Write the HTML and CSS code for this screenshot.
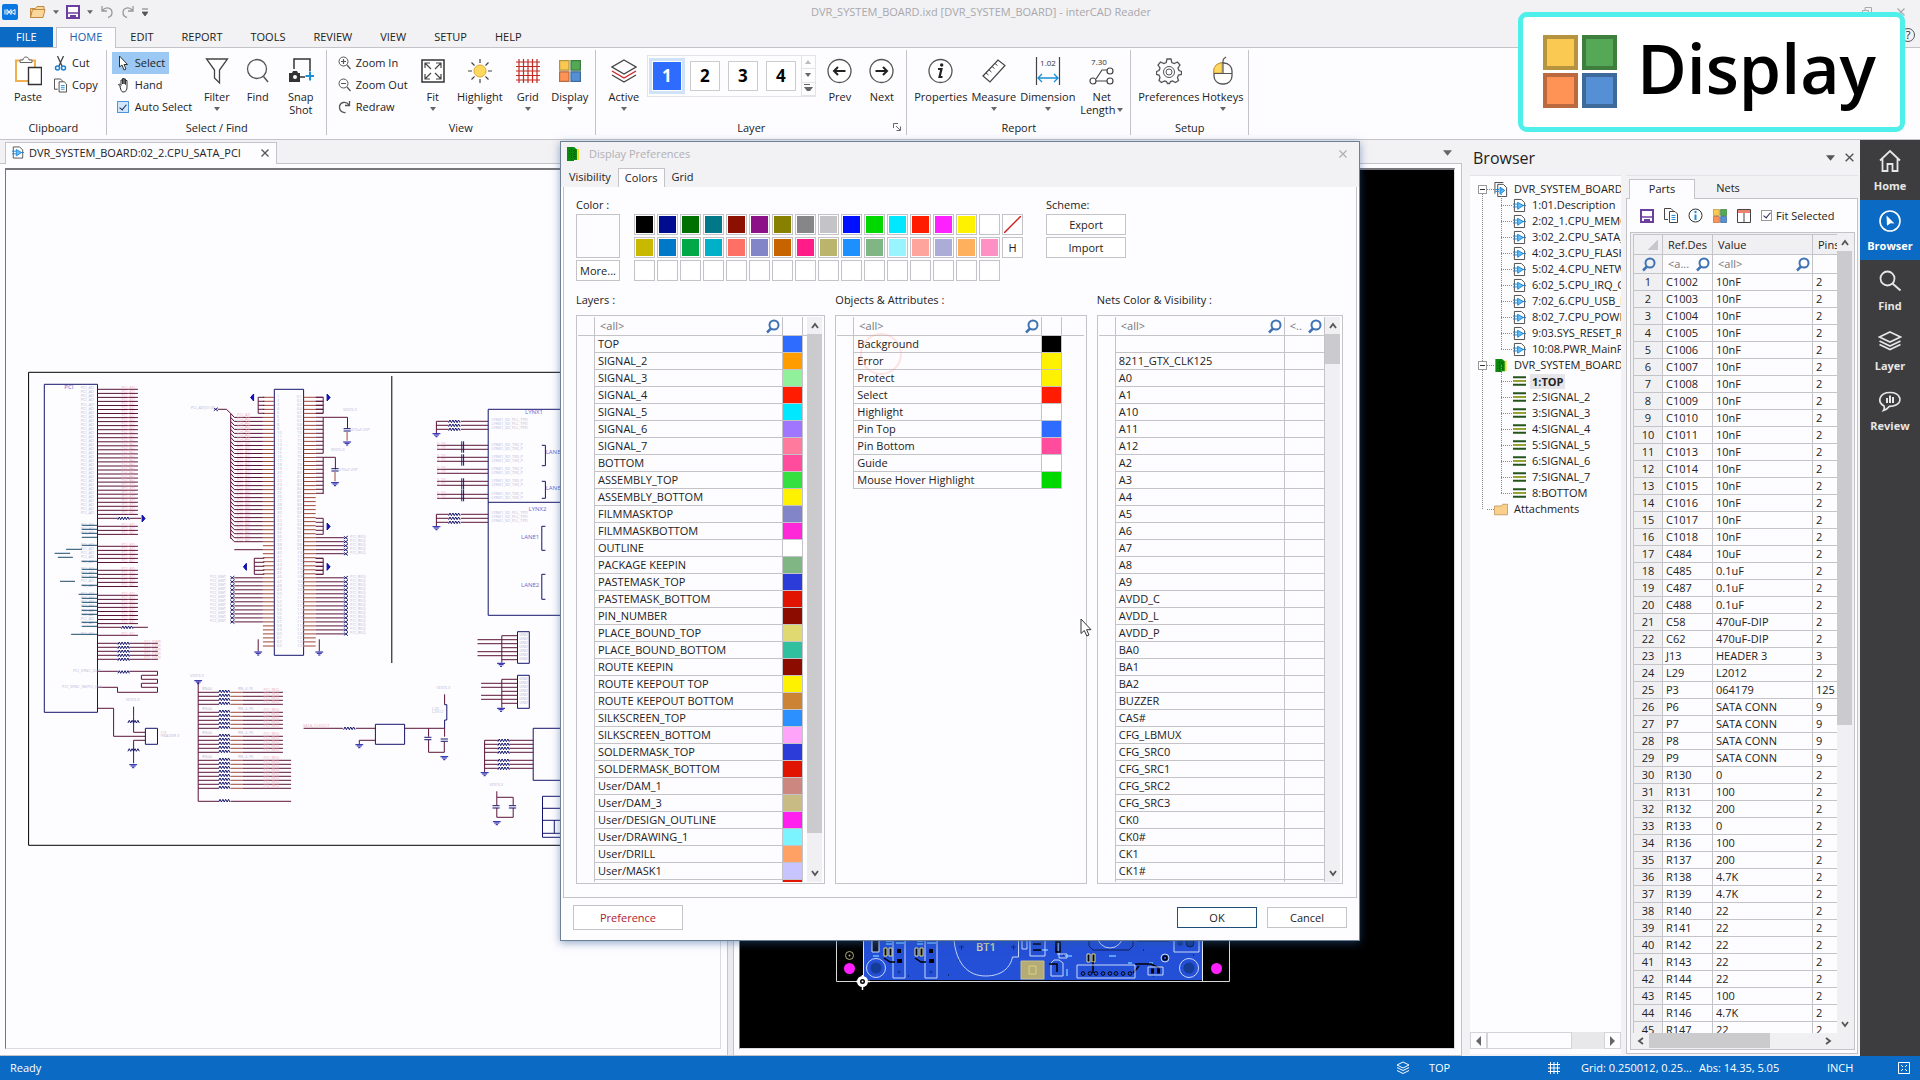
FILE: index.html
```html
<!DOCTYPE html>
<html lang="en">
<head>
    <meta charset="UTF-8">
    <meta name="viewport" content="width=device-width, initial-scale=1.0">
    <title>DVR_SYSTEM_BOARD.ixd [DVR_SYSTEM_BOARD] - interCAD Reader</title>
    <link rel="stylesheet" href="styles.css">
</head>
<body>
    <svg class="sprite" aria-hidden="true">
        <symbol id="i-page" viewBox="0 0 14 16"><path d="M1.5 1.5h7.5l3.500 3.500v9.500h-11z" fill="#fff" stroke="#444"/><path d="M0 6.500h5M0 9.500h5M10 8h4" stroke="#1a7fd0"/><path d="M5 4.500l6 3.500-6 4z" fill="#5fc0ff" stroke="#1a7fd0"/></symbol>
        <symbol id="i-pages" viewBox="0 0 14 16"><path d="M.5 12.500V.5h9" fill="none" stroke="#444"/><path d="M3.500 2.500h6l3.500 3.500v9.500h-9.500z" fill="#fff" stroke="#444"/><path d="M1 8h4M1 10h4" stroke="#1a7fd0"/><path d="M6 5.500l5 3.500-5 4z" fill="#5fc0ff" stroke="#1a7fd0"/></symbol>
        <symbol id="i-board" viewBox="0 0 14 16"><path d="M6 3h7v11H6z" fill="#f2dc2a"/><path d="M1 1h7l3 2.500V14H8v1H1z" fill="#0c8a10"/><path d="M3 5h8M3 8h8M3 11h8M5.500 3v11M8.500 4v10" stroke="#055c08" stroke-dasharray="1 1"/></symbol>
        <symbol id="i-layer" viewBox="0 0 14 10"><path d="M0 1h14M0 9h14" stroke="#24531c" stroke-width="2"/><path d="M0 5h14" stroke="#8c9c24" stroke-width="2"/></symbol>
        <symbol id="i-folder" viewBox="0 0 16 13"><path d="M.5 2.500h8l1.500-2h5.500v12H.5z" fill="#fbcf8c" stroke="#c49a5c"/></symbol>
        <symbol id="i-lens" viewBox="0 0 15 15"><circle cx="9" cy="6" r="4.500" fill="none" stroke="#3f73b4" stroke-width="2"/><path d="M6 9.500L2 13.500" stroke="#3f73b4" stroke-width="2.500"/></symbol>
        <symbol id="i-tiles" viewBox="0 0 22 22"><g stroke-width="1.200"><path d="M.6.6h9.400v9.600H.6z" fill="#f9c952" stroke="#b5933f"/><path d="M12 .6h9.400v9.600H12z" fill="#55a855" stroke="#3e7f3e"/><path d="M.6 11.800h9.400v9.600H.6z" fill="#ff9255" stroke="#ba6a3e"/><path d="M12 11.800h9.400v9.600H12z" fill="#5590d4" stroke="#3e699b"/></g></symbol>
        <symbol id="i-stack" viewBox="0 0 26 26"><g fill="none" stroke="#444" stroke-width="1.300"><path d="M13 2l12 7-12 7L1 9z"/><path d="M1 17l12 7 12-7"/></g><path d="M1 13l12 7 12-7" fill="none" stroke="#d02020" stroke-width="1.300"/></symbol>
        <symbol id="i-save" viewBox="0 0 14 14"><path d="M1 1h12v12H1z" fill="#fff" stroke="#6b3fa0" stroke-width="2"/><path d="M2 8h10" stroke="#6b3fa0" stroke-width="1.500"/><path d="M4 10h6v3H4z" fill="#6b3fa0"/></symbol>
        <symbol id="i-copy" viewBox="0 0 14 15"><path d="M4 11.500H.5V.5H7l2 2V3" fill="none" stroke="#444"/><path d="M5.500 3.500h5.500l2.500 2.500v8.500h-8z" fill="#fff" stroke="#444"/><path d="M7.500 7.500h4M7.500 9.500h4M7.500 11.500h4" stroke="#2b8fd6"/></symbol>
        <symbol id="i-x" viewBox="0 0 10 10"><path d="M1.500 1.500l7 7M8.500 1.500l-7 7" stroke="currentColor" stroke-width="1.300"/></symbol>
        <symbol id="i-caret" viewBox="0 0 8 5"><path d="M0 0h8L4 5z" fill="currentColor"/></symbol>
        <symbol id="i-chev" viewBox="0 0 8 8"><path d="M1 6l3-4 3 4" fill="none" stroke="#555" stroke-width="1.800"/></symbol>
    </svg>

    <header class="titlebar">
        <div class="quick">
            <svg width="16" height="16" viewBox="0 0 16 16"><rect width="16" height="16" rx="2" fill="#0a78e0"/><path d="M3 5.500v5M5 5.500l4 5V5.500l-4 5zM9 8l4-2.500v5z" fill="none" stroke="#fff"/></svg>
            <button aria-label="Open"><svg width="17" height="14" viewBox="0 0 17 14"><path d="M1.500 12.500v-9h5l1.500-2h7v3M1.500 12.500l2-8h12.500l-2 8z" fill="#fbd69a" stroke="#c08a40"/></svg></button>
            <svg class="caret" width="6" height="4"><use href="#i-caret"/></svg>
            <button aria-label="Save"><svg width="14" height="14"><use href="#i-save"/></svg></button>
            <svg class="caret" width="6" height="4"><use href="#i-caret"/></svg>
            <button aria-label="Undo"><svg width="14" height="14" viewBox="0 0 14 14"><path d="M2 1v5h5M2.500 5.500C6 1 12 3 12 7.500c0 3-2 4.500-4 5" fill="none" stroke="#999" stroke-width="1.300"/></svg></button>
            <button aria-label="Redo"><svg width="14" height="14" viewBox="0 0 14 14"><path d="M12 1v5H7M11.500 5.500C8 1 2 3 2 7.500c0 3 2 4.500 4 5" fill="none" stroke="#999" stroke-width="1.300"/></svg></button>
            <svg class="caret" width="6" height="8" viewBox="0 0 6 8"><path d="M0 1h6M0 4h6L3 8z" stroke="#555" fill="#555" stroke-width=".8"/></svg>
        </div>
        <h1>DVR_SYSTEM_BOARD.ixd [DVR_SYSTEM_BOARD] - interCAD Reader</h1>
        <div class="win-buttons"><svg width="10" height="10" viewBox="0 0 10 10"><path d="M.5 3.500h6v6h-6zM3 3V.5h6.500V7H7" fill="none" stroke="#aaa"/></svg><svg width="10" height="10"><use href="#i-x"/></svg></div>
    </header>

    <nav class="ribbon-tabs">
        <a class="file" href="#">FILE</a>
        <a class="active" href="#">HOME</a>
        <a href="#">EDIT</a>
        <a href="#">REPORT</a>
        <a href="#">TOOLS</a>
        <a href="#">REVIEW</a>
        <a href="#">VIEW</a>
        <a href="#">SETUP</a>
        <a href="#">HELP</a>
        <span class="help">?</span>
    </nav>

    <section class="ribbon">
        <div class="group">
            <div class="tools pad-l">
                <button class="big w36"><svg width="28" height="30" viewBox="0 0 28 30"><path d="M2 4.500h19v20.500H2z" fill="#fff" stroke="#f0b050" stroke-width="2"/><path d="M6 6.500V4h3c0-4 6-4 6 0h3v2.500z" fill="#fff" stroke="#666"/><path d="M14.500 11.500h13v17h-13z" fill="#fff" stroke="#333" stroke-width="1.400"/></svg>Paste</button>
                <div class="small-col">
                    <button class="small"><svg width="12" height="15" viewBox="0 0 12 15"><path d="M3 0l4.500 10M9 0L4.500 10" stroke="#444" stroke-width="1.300"/><circle cx="3" cy="12" r="2" fill="none" stroke="#1a7fd0" stroke-width="1.500"/><circle cx="9" cy="12" r="2" fill="none" stroke="#1a7fd0" stroke-width="1.500"/></svg>Cut</button>
                    <button class="small"><svg width="14" height="15"><use href="#i-copy"/></svg>Copy</button>
                </div>
            </div>
            <div class="caption">Clipboard</div>
        </div>
        <div class="group">
            <div class="tools">
                <div class="small-col sel-col">
                    <button class="small on"><svg width="10" height="16" viewBox="0 0 10 16"><path d="M1 1v11l2.500-2 2 5 2-1-2-4.500H9z" fill="#fff" stroke="#333"/></svg>Select</button>
                    <button class="small"><svg width="12" height="16" viewBox="0 0 12 16"><path d="M3 10L1 7.500l1-.5 1.500 1.500V3H5v4V1.500h1.500V7 2H8v5.500V3.500h1.500V10c0 3-1 5-4 5-1.500 0-2-2-3-5z" fill="#fff" stroke="#333"/></svg>Hand</button>
                    <label class="small"><input type="checkbox" checked>Auto Select</label>
                </div>
                <button class="big w38"><svg width="24" height="28" viewBox="0 0 24 28"><path d="M1.500 2h21l-8 11v13l-5-5v-8z" fill="#fff" stroke="#444" stroke-width="1.300"/></svg>Filter<i class="caret-d"></i></button>
                <button class="big w44"><svg width="24" height="28" viewBox="0 0 24 28"><circle cx="11" cy="12" r="9.500" fill="none" stroke="#555" stroke-width="1.300"/><path d="M17.500 19.500L22 25" stroke="#555" stroke-width="1.500"/></svg>Find</button>
                <button class="big w42"><svg width="26" height="28" viewBox="0 0 26 28"><path d="M6 12V2h16v12M12 20h5" fill="none" stroke="#333" stroke-width="1.500"/><path d="M1 16h3l1-2h4l1 2h2v9H1z" fill="#333"/><circle cx="7" cy="20" r="2" fill="#fff"/><path d="M22 14.500v9M17.500 19h8.500" stroke="#1a8fd8" stroke-width="2"/></svg><span>Snap<br>Shot</span></button>
            </div>
            <div class="caption">Select / Find</div>
        </div>
        <div class="group view">
            <div class="tools">
                <div class="small-col view-col">
                    <button class="small"><svg width="13" height="14" viewBox="0 0 13 14"><circle cx="5.500" cy="5.500" r="4.500" fill="none" stroke="#555"/><path d="M9 9l3.500 4M3 5.500h5M5.500 3v5" stroke="#555" stroke-width="1.200"/></svg>Zoom In</button>
                    <button class="small"><svg width="13" height="14" viewBox="0 0 13 14"><circle cx="5.500" cy="5.500" r="4.500" fill="none" stroke="#555"/><path d="M9 9l3.500 4M3 5.500h5" stroke="#555" stroke-width="1.200"/></svg>Zoom Out</button>
                    <button class="small"><svg width="13" height="14" viewBox="0 0 13 14"><path d="M11.500 1v4.500H7M11 5C8 .5 1.500 2 1.500 7.500c0 3 2.500 5.500 6 5" fill="none" stroke="#555" stroke-width="1.300"/></svg>Redraw</button>
                </div>
                <button class="big w44"><svg width="24" height="24" viewBox="0 0 24 24"><path d="M1 1h22v22H1z" fill="#fff" stroke="#333" stroke-width="1.500"/><path d="M4 9V4h5M15 4h5v5M20 15v5h-5M9 20H4v-5M4 4l6 6M20 4l-6 6M20 20l-6-6M4 20l6-6" fill="none" stroke="#444" stroke-width="1.200"/></svg>Fit<i class="caret-d"></i></button>
                <button class="big w50"><svg width="24" height="24" viewBox="0 0 24 24"><circle cx="12" cy="12" r="6" fill="#ffd860" stroke="#e0a830"/><path d="M12 0v4M12 20v4M0 12h4M20 12h4M3.500 3.500l3 3M17.500 17.500l3 3M3.500 20.500l3-3M17.500 6.500l3-3" stroke="#444" stroke-width="1.200"/></svg>Highlight<i class="caret-d"></i></button>
                <button class="big w46"><svg width="24" height="24" viewBox="0 0 24 24"><path d="M3 0v24M7.500 0v24M12 0v24M16.500 0v24M21 0v24M0 3h24M0 7.500h24M0 12h24M0 16.500h24M0 21h24" stroke="#c02a20" stroke-width="1.200"/></svg>Grid<i class="caret-d"></i></button>
                <button class="big w38"><svg width="22" height="22"><use href="#i-tiles"/></svg>Display<i class="caret-d"></i></button>
            </div>
            <div class="caption">View</div>
        </div>
        <div class="group">
            <div class="tools layer-tools">
                <button class="big w46"><svg width="26" height="26"><use href="#i-stack"/></svg>Active<i class="caret-d"></i></button>
                <div class="gallery">
                    <button class="num on">1</button>
                    <button class="num">2</button>
                    <button class="num">3</button>
                    <button class="num">4</button>
                    <div class="spin"><button aria-label="Up"><i class="caret-u"></i></button><button aria-label="Down"><i class="caret-d"></i></button><button aria-label="More"><i class="caret-m"></i></button></div>
                </div>
                <button class="big w44"><svg width="25" height="25" viewBox="0 0 25 25"><circle cx="12.500" cy="12.500" r="11.500" fill="#fff" stroke="#555" stroke-width="1.300"/><path d="M18.500 12.500h-11M11 8.500l-4 4 4 4" fill="none" stroke="#222" stroke-width="2"/></svg>Prev</button>
                <button class="big w40"><svg width="25" height="25" viewBox="0 0 25 25"><circle cx="12.500" cy="12.500" r="11.500" fill="#fff" stroke="#555" stroke-width="1.300"/><path d="M6.500 12.500h11M14 8.500l4 4-4 4" fill="none" stroke="#222" stroke-width="2"/></svg>Next</button>
            </div>
            <div class="caption">Layer<svg class="launcher" width="8" height="8" viewBox="0 0 8 8"><path d="M.5 5V.5H5M3 3l4 4M7.500 3.500v4h-4" fill="none" stroke="#666"/></svg></div>
        </div>
        <div class="group">
            <div class="tools">
                <button class="big w58"><svg width="25" height="25" viewBox="0 0 25 25"><circle cx="12.500" cy="12.500" r="11.500" fill="#fff" stroke="#555" stroke-width="1.300"/><path d="M10 10.500h3.500l-2 8h3" fill="none" stroke="#222" stroke-width="2.200"/><circle cx="13.700" cy="6.500" r="1.700" fill="#222"/></svg>Properties</button>
                <button class="big w48"><svg width="24" height="24" viewBox="0 0 24 24"><path d="M1 17L16 1l7 5.500L8 23z" fill="#fff" stroke="#444" stroke-width="1.200"/><path d="M4 14l2.500 2M7 11l2.500 2M10 7.500l2.500 2M13 4.500l2.500 2" stroke="#444"/></svg>Measure<i class="caret-d"></i></button>
                <button class="big w60"><svg width="26" height="30" viewBox="0 0 26 30"><path d="M1.500 1v28M24.500 1v28" stroke="#444" stroke-width="1.200"/><path d="M3 22h20M7 18l-4 4 4 4M19 18l4 4-4 4" fill="none" stroke="#1a8fd8" stroke-width="1.300"/><text class="icon-text" x="13" y="10">1.02</text></svg>Dimension<i class="caret-d"></i></button>
                <button class="big w48"><svg width="26" height="30" viewBox="0 0 26 30"><path d="M7 23L13 14h5M7 25h11" fill="none" stroke="#444" stroke-width="1.200"/><g fill="#fff" stroke="#444" stroke-width="1.200"><circle cx="4" cy="25" r="3"/><circle cx="21" cy="25" r="3"/><circle cx="21" cy="15" r="3"/></g><text class="icon-text" x="10" y="9">7.30</text></svg>Net<span>Length<i class="caret-in"></i></span></button>
            </div>
            <div class="caption">Report</div>
        </div>
        <div class="group">
            <div class="tools">
                <button class="big w65"><svg width="26" height="26" viewBox="0 0 26 26"><g fill="none" stroke="#555"><path d="M11 1h4l.8 3.500 2.400 1L21.500 4l2.500 3-2 3 1 2.500 2.500 1v3L22.500 17l-1 2.500 1 3-3 2-3-1.500-2 .5-1 2h-2l-1-2-2-.5L5.500 24.500l-2.500-2 1-3L3 17l-2.500-.5v-3l2.500-1L4 10 2 7l2.500-3 3.300 1.500 2.400-1z" stroke-width="1.300"/><circle cx="13" cy="14" r="5.500"/><circle cx="13" cy="14" r="3"/></g></svg>Preferences</button>
                <button class="big w42"><svg width="20" height="30" viewBox="0 0 20 30"><rect x="1" y="7" width="18" height="21" rx="8" fill="#fff" stroke="#555" stroke-width="1.300"/><path d="M1 17v-3c0-4 4-7 8-7v10z" fill="#ffd860" stroke="#e0a830"/><path d="M1 17.500h18M10 17V5c0-3 2-3 3-4" fill="none" stroke="#555" stroke-width="1.200"/></svg>Hotkeys<i class="caret-d"></i></button>
            </div>
            <div class="caption">Setup</div>
        </div>
    </section>

    <main class="workspace">
        <section class="docs">
            <div class="doc-tabs">
                <a class="doc-tab" href="#"><svg width="12" height="15"><use href="#i-page"/></svg>DVR_SYSTEM_BOARD:02_2.CPU_SATA_PCI<svg class="tab-x" width="10" height="10"><use href="#i-x"/></svg></a>
                <svg class="tabs-more" width="9" height="6"><use href="#i-caret"/></svg>
            </div>
            <div class="panes">
                <div class="pane sheet"><svg id="schematic" width="712" height="880" viewBox="6 170 712 880"></svg></div>
                <div class="splitter"></div>
                <div class="pane pcb"><svg id="pcb" width="718" height="880" viewBox="737 170 718 880"></svg></div>
            </div>
        </section>

        <section class="browser">
            <div class="browser-head"><h2>Browser</h2><svg width="9" height="6"><use href="#i-caret"/></svg><svg width="11" height="11"><use href="#i-x"/></svg></div>
            <div class="browser-body">
                <div class="tree-box">
                    <ul class="tree" id="tree"></ul>
                    <div class="hscroll old"><button aria-label="Left"><i class="caret-l"></i></button><div class="track"><div class="thumb tree-thumb"></div></div><button aria-label="Right"><i class="caret-r"></i></button></div>
                </div>
                <div class="parts">
                    <div class="part-tabs"><a class="active" href="#">Parts</a><a href="#">Nets</a></div>
                    <div class="part-page">
                        <div class="part-tools">
                            <button aria-label="Save"><svg width="14" height="14"><use href="#i-save"/></svg></button>
                            <button aria-label="Copy"><svg width="14" height="15"><use href="#i-copy"/></svg></button>
                            <button aria-label="Info"><svg width="15" height="15" viewBox="0 0 15 15"><circle cx="7.500" cy="7.500" r="6.500" fill="#fff" stroke="#333"/><path d="M7.500 6.500V12" stroke="#1a8fd8" stroke-width="2"/><circle cx="7.500" cy="4" r="1.200" fill="#1a8fd8"/></svg></button>
                            <button aria-label="Display"><svg width="14" height="14"><use href="#i-tiles"/></svg></button>
                            <button aria-label="Columns"><svg width="14" height="14" viewBox="0 0 14 14"><path d="M.5.5h13v13H.5zM7 4v9" fill="#fff" stroke="#444"/><path d="M1 2.500h12" stroke="#f08070" stroke-width="3"/></svg></button>
                            <label><input type="checkbox" checked>Fit Selected</label>
                        </div>
                        <div class="grid-box">
                            <div class="grid-main">
                                <div class="grid-clip"><table class="part-grid" id="parts">
                                    <colgroup><col class="c28"><col class="c50"><col class="c100"><col class="c50"></colgroup>
                                    <thead>
                                        <tr class="names"><th><i class="corner"></i></th><th>Ref.Des</th><th>Value</th><th>Pins</th></tr>
                                        <tr class="filters"><th><svg width="15" height="15"><use href="#i-lens"/></svg></th><td><div class="filter"><input aria-label="Filter Ref.Des" value="&lt;a..."><svg width="15" height="15"><use href="#i-lens"/></svg></div></td><td><div class="filter"><input aria-label="Filter Value" value="&lt;all&gt;"><svg width="15" height="15"><use href="#i-lens"/></svg></div></td><td></td></tr>
                                    </thead>
                                    <tbody></tbody>
                                </table></div>
                                <div class="vscroll"><svg width="8" height="8"><use href="#i-chev"/></svg><div class="track"><div class="thumb parts-thumb"></div></div><svg class="down" width="8" height="8"><use href="#i-chev"/></svg></div>
                            </div>
                            <div class="hscroll"><svg class="left" width="8" height="8"><use href="#i-chev"/></svg><div class="track"><div class="thumb"></div></div><svg class="right" width="8" height="8"><use href="#i-chev"/></svg></div>
                        </div>
                    </div>
                </div>
            </div>
        </section>

        <nav class="side">
            <a href="#"><svg width="24" height="24" viewBox="0 0 24 24"><path d="M2 11.500L12 2l10 9.500M4.500 10v12H9.500v-7h5v7h5V10" fill="none" stroke="currentColor" stroke-width="1.800"/></svg>Home</a>
            <a class="active" href="#"><svg width="24" height="24" viewBox="0 0 24 24"><circle cx="12" cy="12" r="10" fill="none" stroke="currentColor" stroke-width="1.600"/><path d="M8.500 6.500l8 8-4-.3-3.500 2.500z" fill="currentColor"/></svg>Browser</a>
            <a href="#"><svg width="24" height="24" viewBox="0 0 24 24"><circle cx="9.500" cy="9.500" r="7" fill="none" stroke="currentColor" stroke-width="1.800"/><path d="M14.500 14.500l8 7" stroke="currentColor" stroke-width="2"/></svg>Find</a>
            <a href="#"><svg width="24" height="24" viewBox="0 0 24 24"><path d="M12 3l10.500 5L12 13 1.500 8zM1.500 12L12 17l10.500-5M1.500 15.500l10.500 5 10.500-5" fill="none" stroke="currentColor" stroke-width="1.700"/></svg>Layer</a>
            <a href="#"><svg width="24" height="24" viewBox="0 0 24 24"><path d="M5.500 21.500c1-1.500 1-3 .5-4.500C-1 13 1 3.500 12 3.500S24.500 13 18 16c-2 1-4 1.300-6.500 1.300-1.500 2-3.500 3.500-6 4.200z" fill="none" stroke="currentColor" stroke-width="1.700"/><path d="M8 9h2v5H8zM11 6.500h2V14h-2zM14 8h2v6h-2z" fill="currentColor"/></svg>Review</a>
        </nav>

        <div class="dialog" role="dialog" aria-label="Display Preferences">
            <div class="dialog-title"><svg width="14" height="16"><use href="#i-board"/></svg>Display Preferences<button aria-label="Close"><svg width="10" height="10"><use href="#i-x"/></svg></button></div>
            <div class="dialog-tabs"><a href="#">Visibility</a><a class="active" href="#">Colors</a><a href="#">Grid</a></div>
            <div class="dialog-page">
                <div class="color-row">
                    <div class="picker"><span class="label">Color :</span><div class="preview"></div><button>More...</button></div>
                    <div class="swatches" id="swatches"></div>
                    <div class="scheme"><span class="label">Scheme:</span><button>Export</button><button>Import</button></div>
                </div>
                <div class="lists">
                    <div class="list layers">
                        <span class="label">Layers :</span>
                        <div class="list-box">
                            <div class="list-clip"><table id="layers"><colgroup><col class="c17"><col class="c188"><col class="c19"><col></colgroup><thead><tr><td></td><td><div class="filter"><input aria-label="Filter layers" value="&lt;all&gt;"><svg width="15" height="15"><use href="#i-lens"/></svg></div></td><td></td><td></td></tr></thead><tbody></tbody></table></div>
                            <div class="vscroll"><svg width="8" height="8"><use href="#i-chev"/></svg><div class="track"><div class="thumb layers-thumb"></div></div><svg class="down" width="8" height="8"><use href="#i-chev"/></svg></div>
                        </div>
                    </div>
                    <div class="list objects">
                        <span class="label">Objects &amp; Attributes :</span>
                        <div class="list-box">
                            <div class="list-clip"><table id="objects"><colgroup><col class="c17"><col class="c188"><col class="c19"><col></colgroup><thead><tr><td></td><td><div class="filter"><input aria-label="Filter objects" value="&lt;all&gt;"><svg width="15" height="15"><use href="#i-lens"/></svg></div></td><td></td><td></td></tr></thead><tbody></tbody></table></div>
                        </div>
                    </div>
                    <div class="list nets">
                        <span class="label">Nets Color &amp; Visibility :</span>
                        <div class="list-box">
                            <div class="list-clip"><table id="nets"><colgroup><col class="c17"><col class="c168"><col class="c40"></colgroup><thead><tr><td></td><td><div class="filter"><input aria-label="Filter nets" value="&lt;all&gt;"><svg width="15" height="15"><use href="#i-lens"/></svg></div></td><td><div class="filter"><input aria-label="Filter visibility" value="&lt;.."><svg width="15" height="15"><use href="#i-lens"/></svg></div></td></tr></thead><tbody></tbody></table></div>
                            <div class="vscroll"><svg width="8" height="8"><use href="#i-chev"/></svg><div class="track"><div class="thumb nets-thumb"></div></div><svg class="down" width="8" height="8"><use href="#i-chev"/></svg></div>
                        </div>
                    </div>
                </div>
            </div>
            <div class="dialog-foot"><button class="pref">Preference</button><button class="ok">OK</button><button>Cancel</button></div>
            <div class="click-ring"></div>
            <svg class="pointer" width="12" height="19" viewBox="0 0 12 19"><path d="M1 1v14.500l3.300-3 2.500 5.500 2.200-1-2.400-5.300H11z" fill="#fff" stroke="#333"/></svg>
        </div>
    </main>

    <footer class="status">
        <span class="ready">Ready</span>
        <svg width="14" height="14" viewBox="0 0 14 14"><path d="M7 1l6 3-6 3-6-3zM1 6.500l6 3 6-3M1 9.500l6 3 6-3" fill="none" stroke="#fff"/></svg>
        <span class="s-layer">TOP</span>
        <svg width="12" height="12" viewBox="0 0 12 12"><path d="M2.500 0v12M6 0v12M9.500 0v12M0 2.500h12M0 6h12M0 9.500h12" stroke="#fff"/></svg>
        <span class="s-grid">Grid: 0.250012, 0.25...</span>
        <span class="s-abs">Abs: 14.35, 5.05</span>
        <span class="s-unit">INCH</span>
        <svg width="12" height="12" viewBox="0 0 12 12"><path d="M.5.5h11v11H.5zM3 3l2 2M9 3L7 5M9 9L7 7M3 9l2-2" fill="none" stroke="#fff"/></svg>
    </footer>

    <div class="callout"><svg width="74" height="73" viewBox="0 0 74 73"><g stroke-width="4"><path d="M2 2h31v31H2z" fill="#f9c952" stroke="#b5933f"/><path d="M41 2h31v31H41z" fill="#55a855" stroke="#3e7f3e"/><path d="M2 40h31v31H2z" fill="#ff9255" stroke="#ba6a3e"/><path d="M41 40h31v31H41z" fill="#5590d4" stroke="#3e699b"/></g></svg><span>Display</span></div>

    <script src="script.js"></script>
</body>
</html>
```

FILE: styles.css
```css
:root {
    --line: #c4c4c8;
    --chrome: #f2f1f4;
    --paper: #fdfcff;
    --blue: #0a6ac4;
    --ink: #222;
}

* {
    box-sizing: border-box;
}

body {
    margin: 0;
    height: 100vh;
    display: flex;
    flex-direction: column;
    overflow: hidden;
    position: relative;
    background: var(--chrome);
    color: var(--ink);
    font: 11px/16px "Open Sans", "Noto Sans", sans-serif;
}

button, input {
    font: inherit;
    color: inherit;
}

button {
    padding: 0;
    border: 0;
    background: none;
}

a {
    color: inherit;
    text-decoration: none;
}

h1, h2, ul {
    margin: 0;
    padding: 0;
    font-weight: normal;
    list-style: none;
}

svg {
    flex: none;
    display: block;
}

.sprite {
    position: absolute;
    width: 0;
    height: 0;
}

/* title bar */
.titlebar {
    height: 27px;
    flex: none;
    display: flex;
    align-items: center;
    padding: 0 14px 3px 2px;
}

.titlebar h1 {
    flex: 1;
    text-align: center;
    font-size: 11px;
    color: #a8a8ac;
}

.quick {
    display: flex;
    align-items: center;
    gap: 7px;
}

.quick .caret {
    color: #666;
}

.quick button:first-of-type {
    margin-left: 4px;
}

.win-buttons {
    width: 92px;
    display: flex;
    justify-content: flex-end;
    gap: 24px;
    color: #aaa;
}

/* ribbon */
.ribbon-tabs {
    height: 21px;
    flex: none;
    display: flex;
    border-bottom: 1px solid var(--line);
    line-height: 20px;
}

.ribbon-tabs a {
    padding: 0 14px;
}

.ribbon-tabs .file {
    background: var(--blue);
    color: #fff;
    padding: 0 16px;
    margin-right: 3px;
}

.ribbon-tabs .active {
    height: 21px;
    padding: 0 13px;
    background: var(--paper);
    border: 1px solid var(--line);
    border-bottom: 0;
    color: #1a5fb0;
    line-height: 18px;
}

.help {
    width: 14px;
    height: 14px;
    margin: 1px 5px 0 auto;
    border: 1px solid #555;
    border-radius: 50%;
    line-height: 12px;
    text-align: center;
}

.ribbon {
    height: 92px;
    flex: none;
    display: flex;
    background: var(--paper);
    border-bottom: 1px solid var(--line);
}

.group {
    display: flex;
    flex-direction: column;
    padding: 0 5px;
    position: relative;
}

.group::after {
    content: '';
    position: absolute;
    right: 0;
    top: 2px;
    bottom: 4px;
    border-right: 1px solid var(--line);
}

.group.view {
    padding: 0 7px 0 6px;
}

.tools {
    display: flex;
    height: 72px;
    padding-top: 4px;
}

.pad-l {
    padding-left: 5px;
    gap: 8px;
}

.caption {
    text-align: center;
    line-height: 16px;
}

.launcher {
    position: absolute;
    right: 6px;
    bottom: 8px;
}

.small-col {
    display: flex;
    flex-direction: column;
}

.sel-col {
    width: 86px;
    align-items: flex-start;
}

.view-col {
    width: 78px;
    padding-left: 5px;
}

.small {
    height: 22px;
    display: flex;
    align-items: center;
    gap: 5px;
    padding-right: 4px;
    white-space: nowrap;
}

.sel-col .small {
    padding-left: 5px;
}

.small svg {
    width: 13px;
}

.small.on {
    background: #9cc8f4;
}

.small input, .part-tools input {
    appearance: none;
    width: 12px;
    height: 12px;
    margin: 0 1px 0 0;
    border: 1px solid #4d94d8;
    background: #cfe6fb;
    display: grid;
    place-items: center;
}

.small input::before, .part-tools input::before {
    content: '';
    width: 3px;
    height: 6px;
    margin-bottom: 2px;
    border: solid #225;
    border-width: 0 1px 1px 0;
    transform: rotate(40deg);
}

.big {
    display: flex;
    flex-direction: column;
    align-items: center;
    line-height: 13px;
    padding-top: 4px;
    white-space: nowrap;
}

.big svg {
    height: 30px;
    margin-bottom: 4px;
}

.w36 { width: 36px; }
.w38 { width: 38px; }
.w40 { width: 40px; }
.w42 { width: 42px; }
.w44 { width: 44px; }
.w46 { width: 46px; }
.w48 { width: 48px; }
.w50 { width: 50px; }
.w58 { width: 58px; }
.w60 { width: 60px; }
.w65 { width: 66px; }

.caret-d, .caret-in, .caret-m, .caret-u {
    border: solid transparent;
    border-width: 4px 3px 0;
    border-top-color: #666;
}

.big .caret-d {
    margin-top: 4px;
}

.caret-in {
    display: inline-block;
    margin: 0 0 2px 2px;
}

.caret-u {
    border-width: 0 3px 4px;
    border-bottom-color: #bbb;
}

.caret-l {
    border: solid transparent;
    border-width: 5px 5px 5px 0;
    border-right-color: #666;
}

.caret-r {
    border: solid transparent;
    border-width: 5px 0 5px 5px;
    border-left-color: #666;
}

.caret-m::before {
    content: '';
    display: block;
    width: 6px;
    height: 1px;
    margin: -7px 0 0 -3px;
    background: #666;
}

.icon-text {
    font-size: 8px;
    text-anchor: middle;
    fill: #333;
}

.gallery {
    display: flex;
    align-items: center;
    gap: 8px;
    height: 42px;
    margin: 3px 2px 0 0;
    padding-left: 4px;
    border: 1px solid #e4e4e8;
}

.num {
    width: 30px;
    height: 30px;
    border: 1px solid #ccc;
    background: #fff;
    color: #000;
    font-size: 17px;
    font-weight: 700;
}

.num.on {
    background: #2e6bff;
    color: #fff;
    border: 1px solid #fff;
    outline: 3px solid #cfe2f8;
}

.spin {
    align-self: stretch;
    width: 14px;
    display: grid;
    margin-left: -3px;
}

.spin button {
    border-left: 1px solid #e4e4e8;
    border-bottom: 1px solid #e4e4e8;
    display: grid;
    place-items: center;
}

/* documents */
.workspace {
    flex: 1;
    min-height: 0;
    display: flex;
    position: relative;
}

.docs {
    flex: 1;
    min-width: 0;
    display: flex;
    flex-direction: column;
}

.doc-tabs {
    height: 24px;
    flex: none;
    display: flex;
    align-items: center;
    justify-content: space-between;
    padding: 2px 10px 0 5px;
    border-bottom: 1px solid var(--line);
    color: #666;
}

.doc-tab {
    height: 22px;
    margin-bottom: -1px;
    display: flex;
    align-items: center;
    gap: 5px;
    padding: 0 6px 2px;
    border: 1px solid var(--line);
    border-bottom: 0;
    background: var(--paper);
    color: var(--ink);
}

.tab-x {
    margin-left: 14px;
    color: #555;
}

.panes {
    flex: 1;
    min-height: 0;
    display: flex;
    background: var(--paper);
    border-right: 1px solid var(--line);
    border-bottom: 1px solid var(--line);
}

.pane {
    flex: 1;
    min-width: 0;
    margin: 4px 6px 6px 5px;
    overflow: hidden;
    border: 1px solid #dcdce0;
    border-top: 2px solid #77777b;
    border-left: 1px solid #77777b;
    background: var(--paper);
}

.pane.sheet {
    flex: 0 0 49%;
}

.pane.pcb {
    background: #000;
}

.splitter {
    width: 7px;
    flex: none;
    background: #ebebef;
    border: solid var(--line);
    border-width: 0 1px;
}

#schematic text {
    font-size: 4px;
    fill: #b9b9d8;
}

#schematic .red {
    fill: #eeb0bc;
}

#schematic .title {
    font-size: 6px;
    fill: #6a6acb;
}

/* browser */
.browser {
    width: 398px;
    flex: none;
    display: flex;
    flex-direction: column;
}

.browser-head {
    height: 35px;
    flex: none;
    display: flex;
    align-items: center;
    gap: 9px;
    padding: 0 5px 0 11px;
    color: #555;
}

.browser-head h2 {
    margin-right: auto;
    font-size: 16px;
    color: var(--ink);
}

.browser-body {
    flex: 1;
    min-height: 0;
    display: flex;
    gap: 5px;
    padding: 0 2px 2px 8px;
}

.tree-box {
    width: 151px;
    flex: none;
    display: flex;
    flex-direction: column;
    justify-content: space-between;
    padding-bottom: 5px;
    background: var(--paper);
    border-top: 1px solid #e4e4e8;
    overflow: hidden;
}

.tree {
    padding: 5px 0 0 8px;
    position: relative;
}

.tree li {
    position: relative;
    white-space: nowrap;
}

.row {
    height: 16px;
    display: flex;
    align-items: center;
    gap: 6px;
    padding-left: 16px;
    position: relative;
}

.row.child {
    padding-left: 35px;
}

.row.child::before, .row.child::after, .row.root::after {
    content: '';
    position: absolute;
    left: 23px;
    top: 8px;
    width: 11px;
    border-top: 1px dotted #888;
}

.row.child::after {
    top: -8px;
    width: 0;
    height: 16px;
    border: 0;
    border-left: 1px dotted #888;
}

.row.root::after {
    left: 9px;
    width: 7px;
}

.tree li:not(:last-child)::before {
    content: '';
    position: absolute;
    left: 4px;
    top: 8px;
    bottom: -8px;
    border-left: 1px dotted #888;
}

.toggle {
    position: absolute;
    left: 0;
    top: 4px;
    width: 9px;
    height: 9px;
    border: 1px solid #999;
    background: linear-gradient(#333, #333) center / 5px 1px no-repeat #fff;
}

.row b {
    background: #e6e6ea;
    padding: 0 2px;
    margin-left: -2px;
    line-height: 15px;
}

.hscroll {
    height: 15px;
    flex: none;
    display: flex;
    align-items: center;
    gap: 4px;
    padding: 0 20px 0 4px;
    background: #f0f0f2;
}

.hscroll .track {
    flex: 1;
    align-self: stretch;
}

.hscroll .thumb {
    width: 71%;
    height: 100%;
    background: #cbcacd;
}

.hscroll .left {
    transform: rotate(-90deg);
}

.hscroll .right {
    transform: rotate(90deg);
}

.vscroll .down {
    transform: rotate(180deg);
}

.old {
    height: 17px;
    gap: 0;
    padding: 0;
    background: #e8e8eb;
}

.old button {
    width: 17px;
    height: 17px;
    display: grid;
    place-items: center;
    background: var(--paper);
    border: 1px solid #d4d4d8;
}

.hscroll .tree-thumb {
    width: 73%;
    background: var(--paper);
    border: 1px solid #d4d4d8;
}

.vscroll {
    width: 15px;
    flex: none;
    display: flex;
    flex-direction: column;
    align-items: center;
    padding: 5px 0;
    gap: 4px;
    background: #f0f0f2;
}

.vscroll .track {
    flex: 1;
    align-self: stretch;
}

.vscroll .thumb {
    background: #cbcacd;
}

.layers-thumb { height: 94%; }
.nets-thumb { height: 30px; }
.parts-thumb { height: 62%; }

.parts {
    flex: 1;
    min-width: 0;
    display: flex;
    flex-direction: column;
    border-top: 1px solid #e4e4e8;
}

.part-tabs {
    height: 23px;
    flex: none;
    display: flex;
    padding: 3px 0 0 3px;
    border-bottom: 1px solid var(--line);
    position: relative;
    z-index: 1;
}

.part-tabs a {
    width: 66px;
    height: 20px;
    line-height: 18px;
    text-align: center;
}

.part-tabs .active {
    background: var(--paper);
    border: 1px solid var(--line);
    border-bottom: 0;
}

.part-page {
    flex: 1;
    min-height: 0;
    display: flex;
    flex-direction: column;
    padding: 0 2px 3px 3px;
    background: var(--paper);
    border: solid var(--line);
    border-width: 0 1px 1px;
}

.part-tools {
    height: 33px;
    flex: none;
    display: flex;
    align-items: center;
    gap: 10px;
    padding: 0 0 0 10px;
}

.part-tools label {
    display: flex;
    align-items: center;
    gap: 3px;
    white-space: nowrap;
}

.part-tools input {
    width: 11px;
    height: 11px;
    background: #fff;
    border-color: #999;
}

.grid-box {
    flex: 1;
    min-height: 0;
    display: flex;
    flex-direction: column;
    border: 1px solid var(--line);
    padding: 1px 2px;
    background: #f0f0f2;
}

.grid-main {
    flex: 1;
    min-height: 0;
    display: flex;
}

.grid-clip, .list-clip {
    flex: 1;
    min-width: 0;
    overflow: hidden;
    background: var(--paper);
}

table {
    border-collapse: separate;
    border-spacing: 0;
    table-layout: fixed;
    width: 100%;
}

.part-grid {
    width: 228px;
    border-left: 1px solid var(--line);
    border-top: 1px solid var(--line);
}

td, th {
    height: 17px;
    padding: 0 0 0 3px;
    border: solid var(--line);
    border-width: 0 1px 1px 0;
    font-weight: normal;
    text-align: left;
    line-height: 16px;
    white-space: nowrap;
    overflow: hidden;
}

.part-grid th {
    background: #f0eff2;
}

.part-grid tbody th, .part-grid .filters th {
    text-align: center;
    padding: 0;
}

.part-grid .filters th svg {
    margin: auto;
}

.names th {
    height: 20px;
    padding-left: 5px;
}

.filters th, .filters td {
    height: 19px;
}

.corner {
    display: block;
    width: 10px;
    height: 10px;
    margin: 0 4px 0 auto;
    background: linear-gradient(135deg, transparent 50%, #c8c8cc 50%);
}

.c17 { width: 17px; }
.c19 { width: 20px; }
.c28 { width: 29px; }
.c40 { width: 40px; }
.c50 { width: 50px; }
.c100 { width: 100px; }
.c168 { width: 168px; }
.c188 { width: 188px; }

.filter {
    display: flex;
    align-items: center;
    padding-right: 2px;
}

.filter input {
    flex: 1;
    min-width: 0;
    width: 0;
    height: 16px;
    padding: 0 0 0 2px;
    border: 0;
    background: none;
    color: #777;
}

/* side bar */
.side {
    width: 60px;
    flex: none;
    background: #3d3c3e;
    color: #e6e6e6;
}

.side a {
    height: 60px;
    display: flex;
    flex-direction: column;
    align-items: center;
    gap: 6px;
    padding-top: 9px;
    font-weight: 700;
    line-height: 14px;
}

.side .active {
    background: var(--blue);
    color: #fff;
}

/* dialog window */
.dialog {
    position: absolute;
    left: 560px;
    top: 1px;
    width: 800px;
    display: flex;
    flex-direction: column;
    background: var(--paper);
    border: 1px solid #6f7f94;
    box-shadow: 0 2px 8px rgba(40, 90, 150, 0.5);
}

.dialog-title {
    height: 26px;
    display: flex;
    align-items: center;
    gap: 9px;
    padding: 0 11px 2px 5px;
    background: var(--chrome);
    color: #b0b0b4;
}

.dialog-title button {
    margin-left: auto;
}

.dialog-tabs {
    height: 19px;
    display: flex;
    padding-left: 1px;
    background: var(--chrome);
    position: relative;
    line-height: 18px;
}

.dialog-tabs a {
    padding: 0 7px;
}

.dialog-tabs .active {
    padding: 0 6px;
    background: var(--paper);
    border: 1px solid var(--line);
    border-bottom: 0;
    z-index: 1;
}

.dialog-page {
    margin: -1px 2px 0;
    padding: 10px 13px 13px 12px;
    border: 1px solid var(--line);
}

.label {
    display: block;
    height: 15px;
}

.color-row {
    display: flex;
    align-items: flex-end;
}

.picker, .scheme {
    display: flex;
    flex-direction: column;
    gap: 2px;
}

.preview {
    width: 44px;
    height: 44px;
    border: 1px solid var(--line);
}

.dialog button:not(.dialog-title button) {
    height: 21px;
    border: 1px solid var(--line);
    background: #fff;
}

.swatches {
    display: grid;
    grid-template-columns: repeat(17, 21px);
    gap: 2px;
    margin: 0 23px 0 14px;
}

.swatches i, .swatches svg, .swatches button {
    width: 21px;
    height: 21px;
    padding: 1px;
    border: 1px solid var(--line);
    background: content-box #fff;
}

.scheme {
    width: 80px;
    align-self: flex-start;
}

.lists {
    display: flex;
    gap: 10px;
    margin-top: 11px;
}

.list {
    flex: 249;
    min-width: 0;
    display: flex;
    flex-direction: column;
    gap: 8px;
}

.objects {
    flex: 251;
}

.nets {
    flex: 246;
}

.list-box {
    height: 569px;
    display: flex;
    padding: 1px 2px 1px 1px;
    border: 1px solid var(--line);
}

.list thead td {
    height: 19px;
}

.list tbody td:first-child {
    border-bottom: 0;
}

.list td:nth-child(4) {
    border-right: 0;
}

.list tbody td:nth-child(4) {
    border-bottom: 0;
}

.dialog-foot {
    height: 42px;
    display: flex;
    align-items: center;
    gap: 10px;
    padding: 0 12px 3px;
}

.dialog .dialog-foot button {
    width: 80px;
}

.dialog .dialog-foot .pref {
    width: 110px;
    height: 25px;
    margin-right: auto;
    color: #b02030;
}

.dialog .dialog-foot .ok {
    border-color: #1f4f78;
}

.click-ring {
    position: absolute;
    left: 299px;
    top: 191px;
    width: 42px;
    height: 42px;
    border: 2px solid rgba(255, 150, 140, 0.25);
    border-radius: 50%;
}

.pointer {
    position: absolute;
    left: 519px;
    top: 476px;
}

/* status bar */
.status {
    height: 24px;
    flex: none;
    display: flex;
    align-items: center;
    padding: 0 10px;
    background: var(--blue);
    color: #fff;
}

.ready {
    margin-right: auto;
}

.s-layer {
    width: 138px;
    padding-left: 19px;
}

.s-grid {
    width: 139px;
    padding-left: 21px;
    white-space: nowrap;
}

.s-abs {
    width: 128px;
    white-space: nowrap;
}

.s-unit {
    width: 71px;
}

.callout {
    position: absolute;
    right: 15px;
    top: 12px;
    height: 120px;
    display: flex;
    align-items: center;
    gap: 20px;
    padding: 0 24px 2px 20px;
    background: #fff;
    border: 5px solid #4fefec;
    border-radius: 9px;
    color: #000;
    font-size: 68px;
    font-weight: 600;
    line-height: 96px;
}

.callout span {
    padding-bottom: 6px;
}
```

FILE: script.js
```javascript
const layers = [
    ['TOP', '#2e6bff'], ['SIGNAL_2', '#ff9c00'], ['SIGNAL_3', '#90f09c'], ['SIGNAL_4', '#ff1c00'],
    ['SIGNAL_5', '#00e8ff'], ['SIGNAL_6', '#a076ff'], ['SIGNAL_7', '#ff7a9c'], ['BOTTOM', '#ff4c9c'],
    ['ASSEMBLY_TOP', '#34e040'], ['ASSEMBLY_BOTTOM', '#fff200'], ['FILMMASKTOP', '#8286c8'],
    ['FILMMASKBOTTOM', '#ff28d8'], ['OUTLINE', '#ffffff'], ['PACKAGE KEEPIN', '#80b684'],
    ['PASTEMASK_TOP', '#2c3cd8'], ['PASTEMASK_BOTTOM', '#e01400'], ['PIN_NUMBER', '#8c0c00'],
    ['PLACE_BOUND_TOP', '#e0d870'], ['PLACE_BOUND_BOTTOM', '#30c0a0'], ['ROUTE KEEPIN', '#8c0c00'],
    ['ROUTE KEEPOUT TOP', '#fff200'], ['ROUTE KEEPOUT BOTTOM', '#cc8434'], ['SILKSCREEN_TOP', '#2c90ff'],
    ['SILKSCREEN_BOTTOM', '#ffa4f8'], ['SOLDERMASK_TOP', '#2c3cd8'], ['SOLDERMASK_BOTTOM', '#e01400'],
    ['User/DAM_1', '#cc8880'], ['User/DAM_3', '#c8bc84'], ['User/DESIGN_OUTLINE', '#ff20f0'],
    ['User/DRAWING_1', '#7cf4ff'], ['User/DRILL', '#ffa064'], ['User/MASK1', '#c8c4ff'], ['', '#e01400']
];

const objects = [
    ['Background', '#000000'], ['Error', '#fff200'], ['Protect', '#fff200'], ['Select', '#ff1c00'],
    ['Highlight', '#ffffff'], ['Pin Top', '#2e6bff'], ['Pin Bottom', '#ff4c9c'], ['Guide', '#ffffff'],
    ['Mouse Hover Highlight', '#00d800']
];

const nets = ['', '8211_GTX_CLK125', 'A0', 'A1', 'A10', 'A11', 'A12', 'A2', 'A3', 'A4', 'A5', 'A6', 'A7', 'A8', 'A9',
    'AVDD_C', 'AVDD_L', 'AVDD_P', 'BA0', 'BA1', 'BA2', 'BUZZER', 'CAS#', 'CFG_LBMUX', 'CFG_SRC0', 'CFG_SRC1',
    'CFG_SRC2', 'CFG_SRC3', 'CK0', 'CK0#', 'CK1', 'CK1#', ''];

const parts = [
    ...['C1002', 'C1003', 'C1004', 'C1005', 'C1006', 'C1007', 'C1008', 'C1009', 'C1010', 'C1011', 'C1013',
        'C1014', 'C1015', 'C1016', 'C1017', 'C1018'].map(ref => [ref, '10nF', 2]),
    ['C484', '10uF', 2], ['C485', '0.1uF', 2], ['C487', '0.1uF', 2], ['C488', '0.1uF', 2],
    ['C58', '470uF-DIP', 2], ['C62', '470uF-DIP', 2], ['J13', 'HEADER 3', 3], ['L29', 'L2012', 2],
    ['P3', '064179', 125], ['P6', 'SATA CONN', 9], ['P7', 'SATA CONN', 9], ['P8', 'SATA CONN', 9],
    ['P9', 'SATA CONN', 9], ['R130', '0', 2], ['R131', '100', 2], ['R132', '200', 2], ['R133', '0', 2],
    ['R136', '100', 2], ['R137', '200', 2], ['R138', '4.7K', 2], ['R139', '4.7K', 2], ['R140', '22', 2],
    ['R141', '22', 2], ['R142', '22', 2], ['R143', '22', 2], ['R144', '22', 2], ['R145', '100', 2],
    ['R146', '4.7K', 2], ['R147', '22', 2]
];

const palette = [
    '#000', '#000c90', '#007000', '#007888', '#8c1000', '#8c1088', '#888000', '#868588', '#c4c3c6', '#0010ff',
    '#00d800', '#00e8ff', '#ff1c00', '#ff20ff', '#fff200', '#fff', 'none',
    '#c8b800', '#0078c8', '#00a848', '#00b0c8', '#ff7064', '#8286c8', '#c86400', '#ff1c88', '#bab46c', '#1c90ff',
    '#80b684', '#98f4ff', '#ffa49c', '#acacd8', '#ffb05c', '#ff90c4', 'H',
    ...Array(16).fill('#fff')
];

const tree = [
    ['DVR_SYSTEM_BOARD', 'pages', 'page', ['1:01.Description', '2:02_1.CPU_MEMORY', '3:02_2.CPU_SATA_PCI',
        '4:02_3.CPU_FLASH', '5:02_4.CPU_NETWORK', '6:02_5.CPU_IRQ_GPIO', '7:02_6.CPU_USB_IO', '8:02_7.CPU_POWER',
        '9:03.SYS_RESET_RTC', '10:08.PWR_MainPower']],
    ['DVR_SYSTEM_BOARD', 'board', 'layer', ['<b>1:TOP</b>', '2:SIGNAL_2', '3:SIGNAL_3', '4:SIGNAL_4',
        '5:SIGNAL_5', '6:SIGNAL_6', '7:SIGNAL_7', '8:BOTTOM']],
    ['Attachments', 'folder', '', []]
];

const body = id => document.querySelector(`#${id} tbody`);
const colorRow = ([name, color]) =>
    `<tr><td></td><td>${name}</td><td style="background:${color}"></td><td></td></tr>`;

body('layers').innerHTML = layers.map(colorRow).join('');
body('objects').innerHTML = objects.map(colorRow).join('');
body('nets').innerHTML = nets.map(n => `<tr><td></td><td>${n}</td><td></td></tr>`).join('');
body('parts').innerHTML = parts.map((p, i) =>
    `<tr><th>${i + 1}</th><td>${p[0]}</td><td>${p[1]}</td><td>${p[2]}</td></tr>`).join('');

document.getElementById('swatches').innerHTML = palette.map(c => {
    if (c === 'H') return '<button>H</button>';
    if (c === 'none') return '<svg viewBox="0 0 17 17"><path d="M0 17L17 0" stroke="#d02020" stroke-width="1.500"/></svg>';
    return `<i style="background-color:${c}"></i>`;
}).join('');

const icon = (name, w = 14, h = 15) => `<svg width="${w}" height="${h}"><use href="#i-${name}"/></svg>`;
document.getElementById('tree').innerHTML = tree.map(([name, ico, childIco, kids]) =>
    `<li><div class="row root">${kids.length ? '<span class="toggle"></span>' : ''}${icon(ico)}${name}</div>` +
    kids.map(k => `<div class="row child">${icon(childIco, 13, childIco === 'layer' ? 10 : 15)}${k}</div>`).join('') +
    '</li>').join('');

// ---- schematic sheet ----
// coordinates are on the sheet's own grid: 2.8 units per px across, 3 per px down
const sx = x => Math.round(x / 2.8 * 10) / 10;
const sy = y => Math.round((360 + y / 3) * 10) / 10;
const NAVY = '#14146c';
const WIRE = '#5a1438';
const RED = '#a04838';
let out = [];

const line = (color, ...p) => {
    let d = '';
    for (let i = 0; i < p.length; i += 2) d += `${i ? 'L' : 'M'}${sx(p[i])} ${sy(p[i + 1])}`;
    out.push(`<path d="${d}" fill="none" stroke="${color}"/>`);
};
const box = (x1, y1, x2, y2) => line(NAVY, x1, y1, x2, y1, x2, y2, x1, y2, x1, y1);
const text = (x, y, s, cls = '') => out.push(`<text x="${sx(x)}" y="${sy(y)}" class="${cls}">${s}</text>`);
const res = (x, y) => {
    const p = [];
    for (let i = 0; i <= 8; i++) p.push(x + i * 4, y + (i % 2 ? -4 : 4));
    line(NAVY, ...p);
};
const gnd = (x, y) => {
    line('#1010a0', x - 11, y, x + 11, y);
    line('#1010a0', x - 7, y + 4, x + 7, y + 4);
    line('#1010a0', x - 3, y + 9, x + 3, y + 9);
};
const port = (x, y) => out.push(`<path d="M${sx(x - 5)} ${sy(y - 4)}l4 3M${sx(x - 5)} ${sy(y + 4)}l4-3" stroke="${NAVY}"/>`);
const flag = (x, y, dir) => out.push(`<path d="M${sx(x)} ${sy(y - 10)}v7l${dir * 3}-3.500z" fill="#1010c0" stroke="#1010a0"/>`);

line('#000', 80, 37, 1800, 37);
line('#000', 80, 37, 80, 1456, 1800, 1456);
line('#000', 1097, 48, 1097, 909);

// PCI connector
box(124, 73, 273, 1057);
text(180, 86, 'PCI', 'title');
const rows = (from, to) => {
    for (let y = from; y <= to; y += 12.1) {
        line(WIRE, 273, y, 386, y);
        text(226, y, 'PCI_AD', '');
        text(340, y - 2, 'PCI_AD', 'red');
    }
};
rows(88, 466);
line(WIRE, 273, 475, 330, 475);
res(330, 475);
line(WIRE, 362, 475, 395, 475);
flag(398, 475, 1);
[[499, 524], [559, 608], [631, 680], [706, 792], [826, 830]].forEach(r => rows(r[0], r[1]));
[496, 508, 520, 532, 556, 604, 628, 640, 652, 676, 715, 727, 739, 751, 763, 787, 799].forEach(y => line('#1c4c6c', 229, y, 272, y));
line('#1c4c6c', 185, 568, 230, 568);
line('#1c4c6c', 153, 580, 196, 580);
line('#1c4c6c', 162, 592, 204, 592);
line('#1c4c6c', 168, 664, 210, 664);
line('#1c4c6c', 220, 703, 272, 703);
line('#1c4c6c', 199, 823, 272, 823);
line(WIRE, 273, 802, 340, 802);
res(340, 802);
line(WIRE, 372, 802, 414, 802);
for (let y = 850; y < 900; y += 12) {
    line(WIRE, 273, y, 330, y);
    res(330, y);
    line(WIRE, 362, y, 442, y);
    text(404, y - 2, 'PCI_PWR', 'red');
}
line(WIRE, 273, 934, 330, 934);
res(330, 936);
line(WIRE, 362, 934, 441, 934, 441, 946, 396, 946, 396, 958, 441, 958, 441, 970, 396, 970, 396, 982, 441, 982, 441, 997, 329, 997, 329, 982, 273, 982);
text(204, 936, 'PCI_SYNC_OUT');
text(174, 984, 'PCI_SYNC_IN/PCI_CLK');
line(WIRE, 273, 1045, 318, 1045, 318, 1129, 407, 1129);
line(WIRE, 374, 1040, 374, 1070, 374, 1117, 407, 1117);
line(WIRE, 407, 1141, 374, 1141, 374, 1210);
res(358, 1085);
res(358, 1170);
gnd(373, 1214);
box(407, 1105, 441, 1153);
text(352, 1022, 'VDD3.3');
text(450, 1122, 'J13');
text(450, 1132, 'HEADER 3');

// 120 pin header
box(768, 88, 850, 886);
for (let i = 0, y = 112; y < 866; i++, y += 12.03) {
    const wide = i > 4 && i < 37 || i === 38 || i > 44 && i < 57;
    line(RED, 736, y, 768, y);
    line(RED, 850, y, 884, y);
    text(776, y + 2, i + 1);
    text(832, y + 2, i + 61);
    if (wide) line(WIRE, 656, y, 736, y);
    if (i > 4 && i < 37) {
        line(WIRE, 656, y, 646, y - 12);
        text(664, y - 3, 'PCI_AD', 'red');
    }
    if (i > 44 && i < 57) {
        port(650, y);
        text(588, y, 'PCI_GNT');
    }
    if (i > 34 && i < 40 || i > 44 && i < 60) {
        line(WIRE, 884, y, 963, y);
        port(968, y);
        text(980, y, 'PCI_REQ');
    }
}
line(WIRE, 646, 160, 646, 536);
line(WIRE, 610, 148, 634, 148, 646, 160);
port(604, 148);
text(534, 147, 'PCI_AD[31:0]');
line(WIRE, 723, 112, 723, 160);
line(WIRE, 712, 595, 712, 643);
line(WIRE, 723, 838, 723, 874);
line(WIRE, 894, 838, 894, 874);
[112, 124, 136, 148, 160].forEach(y => { line(WIRE, 723, y, 740, y); line(WIRE, 884, y, 905, y); });
[595, 607, 619, 631, 643].forEach(y => { line(WIRE, 712, y, 740, y); line(WIRE, 884, y, 905, y); });
[[112, 160], [172, 280], [292, 402], [475, 523], [595, 643]].forEach(([a, b]) => {
    line(WIRE, 905, a, 905, b);
    for (let y = a; y <= b; y += 12) line(WIRE, 884, y, 905, y);
});
flag(710, 112, -1);
flag(690, 620, -1);
[112, 499, 620].forEach(y => flag(916, y, 1));
gnd(723, 876);
gnd(894, 876);
line(WIRE, 905, 172, 973, 172, 973, 205);
line(WIRE, 905, 292, 939, 292, 939, 328);
const cap = (x, y) => { line(NAVY, x - 10, y - 3, x + 10, y - 3); line(NAVY, x - 10, y + 4, x + 10, y + 4); };
cap(972, 209);
cap(938, 329);
line(RED, 972, 216, 972, 242);
line(RED, 938, 336, 938, 364);
gnd(972, 246);
gnd(938, 368);
text(960, 153, 'VDD3.3');
text(982, 212, '470uF-DIP');
text(926, 272, 'VDD5.0');
text(948, 332, '470uF-DIP');

// pull-up networks
line(WIRE, 555, 965, 555, 1324);
gnd(555, 962);
text(532, 950, 'VDD3.3');
[[997, 4, 792], [1057, 5, 792], [1129, 5, 792], [1201, 8, 815]].forEach(([y0, n, end]) => {
    text(566, y0 - 8, 'RN44');
    text(666, y0 - 8, 'RN_4.7K');
    for (let i = 0; i < n; i++) {
        const y = y0 + i * 12;
        line(WIRE, 555, y, 612, y);
        res(612, y - 3);
        line(RED, 646, y, 680, y);
        line(WIRE, 680, y, end, y);
        text(738, y - 4, 'PCI_REQ', 'red');
    }
});
line(WIRE, 555, 1324, 612, 1324);
res(612, 1322);
line(WIRE, 646, 1324, 815, 1324);

// clock buffer
text(848, 1101, 'SATA_CLKOUT', 'red');
line(WIRE, 850, 1105, 960, 1105);
res(962, 1105);
line(WIRE, 996, 1105, 1051, 1105);
box(1051, 1093, 1133, 1153);
line(WIRE, 1051, 1141, 1006, 1141, 1006, 1152);
gnd(1006, 1154);
line(WIRE, 1133, 1105, 1245, 1105, 1245, 1130);
line(WIRE, 1200, 1105, 1200, 1130);
line(WIRE, 1200, 1140, 1200, 1177, 1244, 1177, 1244, 1145);
cap(1198, 1135);
cap(1244, 1140);
gnd(1244, 1190);
line(WIRE, 1245, 1003, 1245, 1034);
line(NAVY, 1245, 1034, 1251, 1034, 1251, 1080, 1245, 1080, 1245, 1105);
text(1222, 986, 'VDD3.3');
text(1210, 1049, 'L29');
text(1210, 1060, 'L2012');

// SATA lanes
line(NAVY, 1700, 148, 1367, 148, 1367, 766, 1700, 766);
line(NAVY, 1367, 427, 1700, 427);
text(1470, 161, 'LYNX1', 'title');
text(1480, 452, 'LYNX2', 'title');
text(1528, 281, 'LANE1', 'title');
text(1528, 389, 'LANE2', 'title');
text(1459, 536, 'LANE1', 'title');
text(1459, 680, 'LANE2', 'title');
[[1527, 256, 317], [1527, 364, 415], [1517, 499, 571], [1517, 643, 718]].forEach(([x, a, b]) => {
    const end = x === 1517 ? 1527 : 1517;
    line(NAVY, end, a, 1517 + (x - 1517), a, x, b, end, b);
});
[184, 463].forEach(y0 => {
    [0, 12, 24].forEach(d => {
        line(WIRE, 1222, y0 + d, 1256, y0 + d);
        res(1256, y0 + d);
        line(WIRE, 1290, y0 + d, 1367, y0 + d);
        text(1376, y0 + d, 'LYNX1_SD_PLL_TPD');
    });
    line(WIRE, 1222, y0, 1222, y0 + 36);
    gnd(1222, y0 + 37);
});
[256, 268, 292, 304, 328, 340, 364, 376, 403, 415].forEach(y => {
    line(WIRE, 1224, y, 1367, y);
    text(1376, y + 2, 'LYNX1_SD_TX0_P');
    text(1224, y - 2, 'S_TX', 'red');
});
[244, 283, 355, 390].forEach(y => { line(NAVY, 1293, y, 1293, y + 34); line(NAVY, 1298, y, 1298, y + 34); });
[[815, 910, 1337], [946, 1045, 1347]].forEach(([a, b, x]) => {
    out.push(`<path d="M${sx(1449)} ${sy(a)}H${sx(1482)}V${sy(b)}H${sx(1449)}z" fill="none" stroke="${NAVY}"/>`);
    for (let i = 0; i < 7; i++) {
        const y = a + 12 + i * 12;
        line(WIRE, [0, 3, 6].includes(i) ? 1405 : x, y, 1449, y);
        text(1454, y + 2, 'GND');
    }
    line(WIRE, 1405, a + 12, 1405, b - 2);
    gnd(1403, b);
});
line(NAVY, 1700, 1105, 1493, 1105, 1493, 1261, 1700, 1261);
[1141, 1153, 1165, 1177, 1201, 1213, 1225].forEach(y => {
    line(WIRE, 1357, y, 1394, y);
    res(1394, y);
    line(WIRE, 1426, y, 1493, y);
});
line(WIRE, 1357, 1141, 1357, 1236);
gnd(1357, 1238);
line(WIRE, 1391, 1294, 1391, 1312, 1437, 1312, 1437, 1336);
line(WIRE, 1391, 1312, 1391, 1336);
line(WIRE, 1391, 1344, 1391, 1372, 1437, 1372, 1437, 1344);
cap(1389, 1340);
cap(1435, 1340);
gnd(1391, 1385);
text(1370, 1278, 'VDD3.3');
line(NAVY, 1700, 1309, 1519, 1309, 1519, 1432, 1700, 1432);
line(NAVY, 1519, 1345, 1700, 1345);
line(NAVY, 1519, 1381, 1700, 1381);
line(NAVY, 1552, 1381, 1552, 1420);
line(NAVY, 1519, 1420, 1700, 1420);

document.getElementById('schematic').innerHTML = out.join('');

// ---- board ----
const pads = (xs, y) => xs.map(x => `<circle cx="${x}" cy="${y}" r="1.800" fill="#2450d8" stroke="#000"/>`).join('');
const hole = (x, y) => `<circle cx="${x}" cy="${y}" r="9.500" fill="none" stroke="#c8d8f8"/><circle cx="${x}" cy="${y}" r="5.500" fill="#143c98"/>`;
const conn = x => `<path d="M${x} 930h12v48h-12z" fill="none" stroke="#c8d8f8"/>
    <path d="M${x + 4} 949h4v4h-4zM${x + 4} 959h5v4h-5z" fill="#000"/><circle cx="${x + 6}" cy="972" r="1.500" fill="#143c98"/>`;
const chip = (x, y) => `<path d="M${x} ${y}h3v8h-3zM${x + 5} ${y}h3v8h-3z" fill="#000" stroke="#e0dca0"/>`;

document.getElementById('pcb').innerHTML = `
    <path d="M833.500 900v81.500h393V900" fill="none" stroke="#d8d8d8"/>
    <path d="M860 900h339v80H860z" fill="#2450d8"/>
    <path d="M860.500 900v81M1199.500 900v81" stroke="#e8e8f0"/>
    <path d="M870 945h1M905 976h1M955 960h1M1000 938h1M1030 975h1M1060 955h1M1140 950h1M1150 976h1M1190 955h1M945 975h1" stroke="#0c2a80" stroke-width="2"/>
    <circle cx="846.500" cy="955.500" r="4" fill="none" stroke="#b0ac80"/><circle cx="846.500" cy="955.500" r="1" fill="#b0ac80"/>
    <circle cx="846.500" cy="968.500" r="5.500" fill="#ff20ff"/><circle cx="1213.500" cy="968.500" r="5.500" fill="#ff20ff"/>
    ${hole(873, 968)}${hole(1186, 968)}${conn(890)}${conn(922)}
    <path d="M869 930h7v22h-7z" fill="#101830" stroke="#c8d8f8"/>
    ${chip(881, 948)}${chip(912, 948)}${chip(1084, 954)}
    <path d="M883 941h6M883 944h6M893 943h9M914 941h6M914 944h6M924 943h9M870 956h6M1039 950h6M1062 956h7M1106 956h7M1063 970h1v6M1125 963h4M1146 963h4" stroke="#5ca0ff" stroke-width="2"/>
    <path d="M881 958l6 4h5M912 958l6 4h5M1090 962v11M1132 964h16l8 4M1130 973l6-7" fill="none" stroke="#000" stroke-width="1.500"/>
    <path d="M950.500 930c0 34 15 46 32 46s25-9 27-19h6v-27" fill="none" stroke="#c8d8f8"/>
    <text x="973" y="951" font-size="11" font-weight="600" fill="#d8d4a8">BT1</text>
    <path d="M956 947h5M958.500 945v5M1008 947h5M1010.500 945v5" stroke="#0c2a80"/>
    <path d="M1018 961h23v18h-23z" fill="#b4ac74" stroke="#c8c088"/><path d="M1026 966h7v8h-7z" fill="none" stroke="#d8d080"/>
    <path d="M1019 930h5v19h-5zM1027 938h15v18h-15zM1051 938h5v20h8v-4h-10M1048 963l3-3h5l4 3v13h-12zM1074 965l4 0h54v13h-58zM1171 930h25v22h-25z" fill="none" stroke="#c8d8f8"/>
    <path d="M1053 942h4v10h-4zM1030 944h8M1030 950h8M1046 964h8v8" fill="none" stroke="#000" stroke-width="1.500"/>
    <path d="M1086 930v16l4 4h36l4-4v-16M1134 941h32" fill="none" stroke="#0c1c50"/>
    <circle cx="1107" cy="935" r="13" fill="none" stroke="#c8d8f8"/>
    ${pads([1080, 1087, 1093, 1100, 1107, 1113, 1120, 1127], 973.500)}
    <path d="M1145 967h15v8h-15z" fill="none" stroke="#c8d8f8"/><path d="M1148 971h3M1154 971h3" stroke="#000" stroke-width="5"/>
    <circle cx="1162" cy="958" r="4" fill="none" stroke="#c8d8f8"/><circle cx="1162" cy="958" r="2" fill="none" stroke="#000" stroke-width="1.500"/>
    <circle cx="1177" cy="943" r="3" fill="#143c98"/><circle cx="1187" cy="943" r="4" fill="#143c98" stroke="#0c1c50"/>
    <path d="M859.500 975v15M853 981.500h14" stroke="#fff" stroke-width="1.500"/>
    <circle cx="859.500" cy="981.500" r="4" fill="#000" stroke="#fff" stroke-width="3"/><circle cx="859.500" cy="981.500" r="1" fill="#fff"/>`;
```
